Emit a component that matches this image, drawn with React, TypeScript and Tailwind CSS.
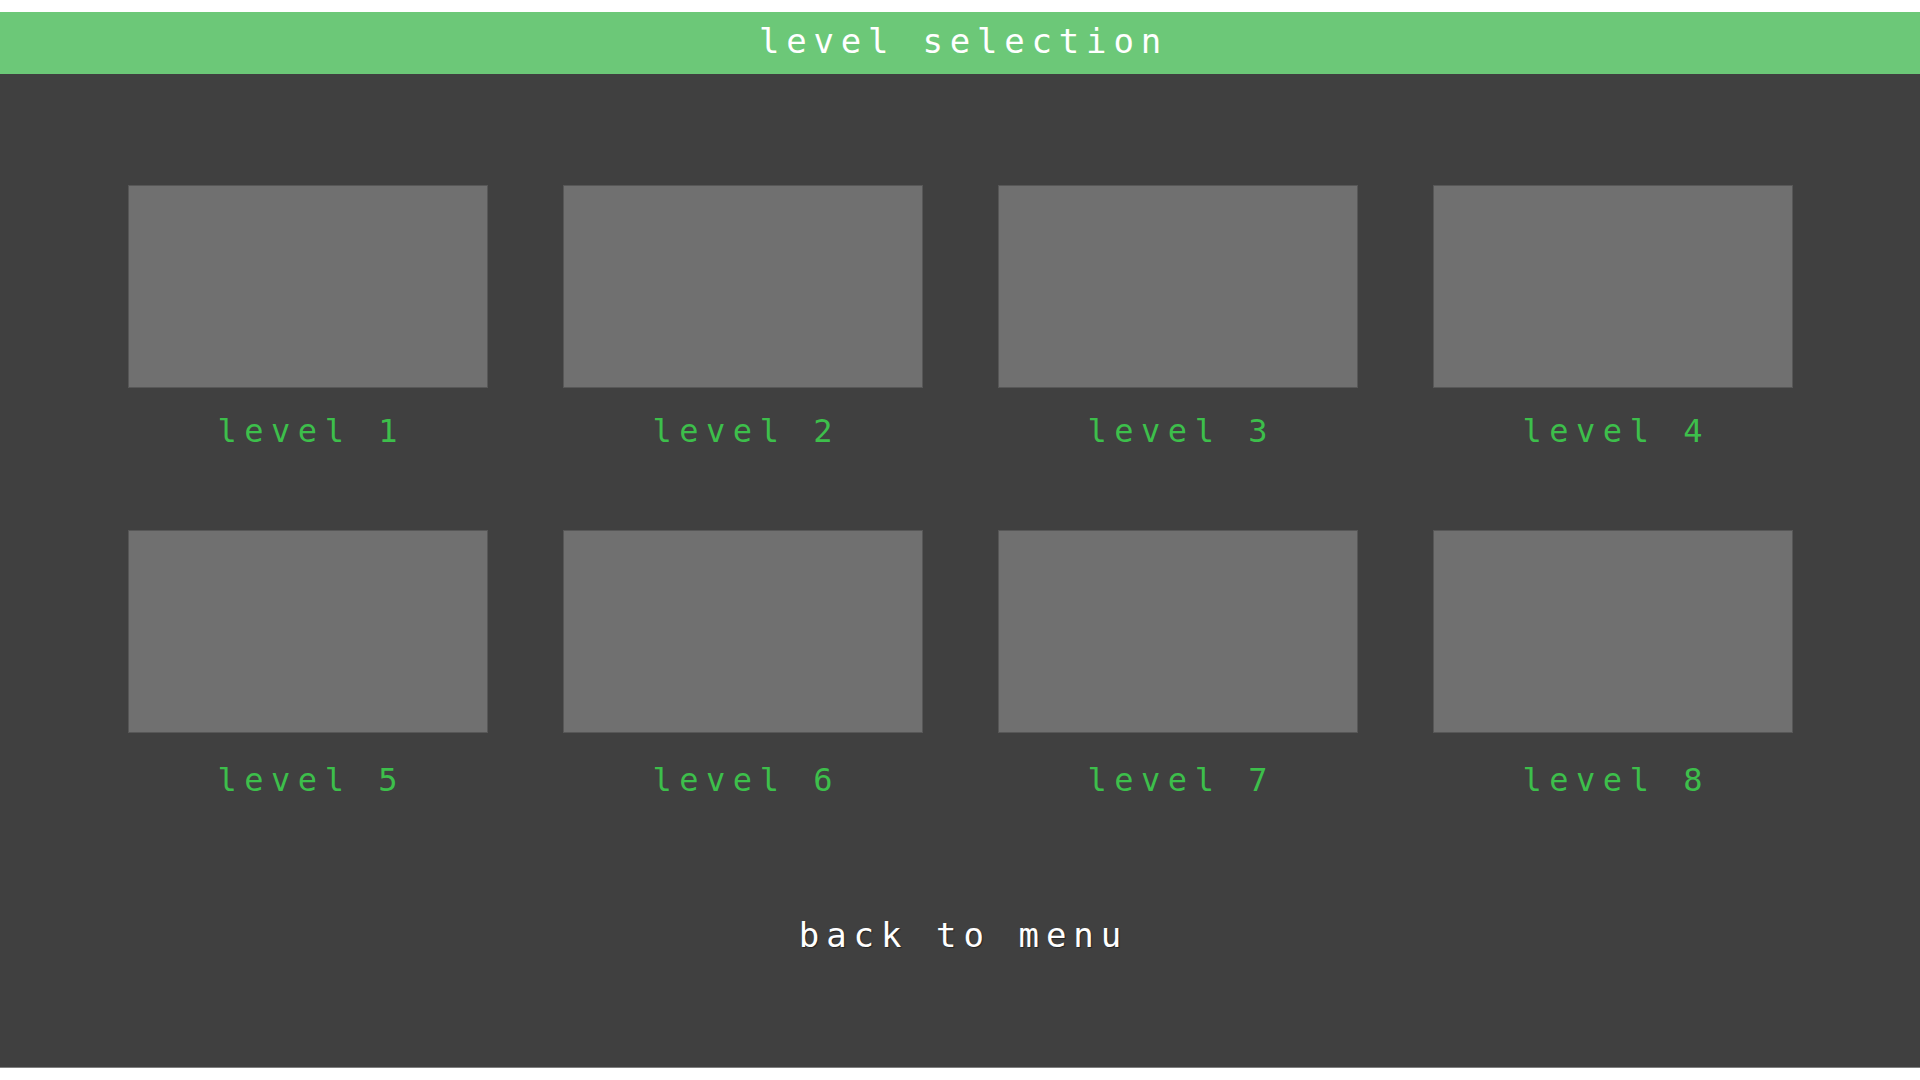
import React from 'react';

const levels = [1, 2, 3, 4, 5, 6, 7, 8];

const font = { fontFamily: '"DejaVu Sans Mono", "Liberation Mono", monospace' };

function LevelCard({ n, secondRow }: { n: number; secondRow: boolean }) {
  return (
    <div className="flex flex-col items-center">
      <button className="w-[360px] h-[203px] bg-[#707070] border border-[#575757] cursor-pointer" />
      <div
        className={`${secondRow ? 'mt-[31px]' : 'mt-[27px]'} text-[32px] leading-none tracking-[7.5px] pl-[7.5px] text-[#3dbf4b] whitespace-pre`}
      >
        {`level ${n}`}
      </div>
    </div>
  );
}

export default function App() {
  return (
    <div className="w-[1920px] h-[1080px] bg-white flex flex-col overflow-hidden" style={font}>
      <div className="h-[12px] shrink-0" />
      {/* header */}
      <div className="h-[62px] shrink-0 bg-[#6cc878] flex justify-center pt-[12px]">
        <h1 className="text-[34px] leading-none tracking-[6.8px] pl-[6.8px] text-white whitespace-pre">
          level selection
        </h1>
      </div>

      {/* body */}
      <div className="h-[994px] shrink-0 bg-[#404040] flex flex-col items-center pt-[111px] border-b border-[#808080]">
        <div className="grid grid-cols-4 gap-x-[75px] gap-y-[83px]">
          {levels.map((n, i) => (
            <LevelCard key={n} n={n} secondRow={i >= 4} />
          ))}
        </div>
        <button className="mt-[122px] text-[34px] leading-none tracking-[7px] pl-[7px] text-white whitespace-pre [text-shadow:1px_1px_1px_rgba(0,0,0,0.45)]">
          back to menu
        </button>
      </div>
    </div>
  );
}
